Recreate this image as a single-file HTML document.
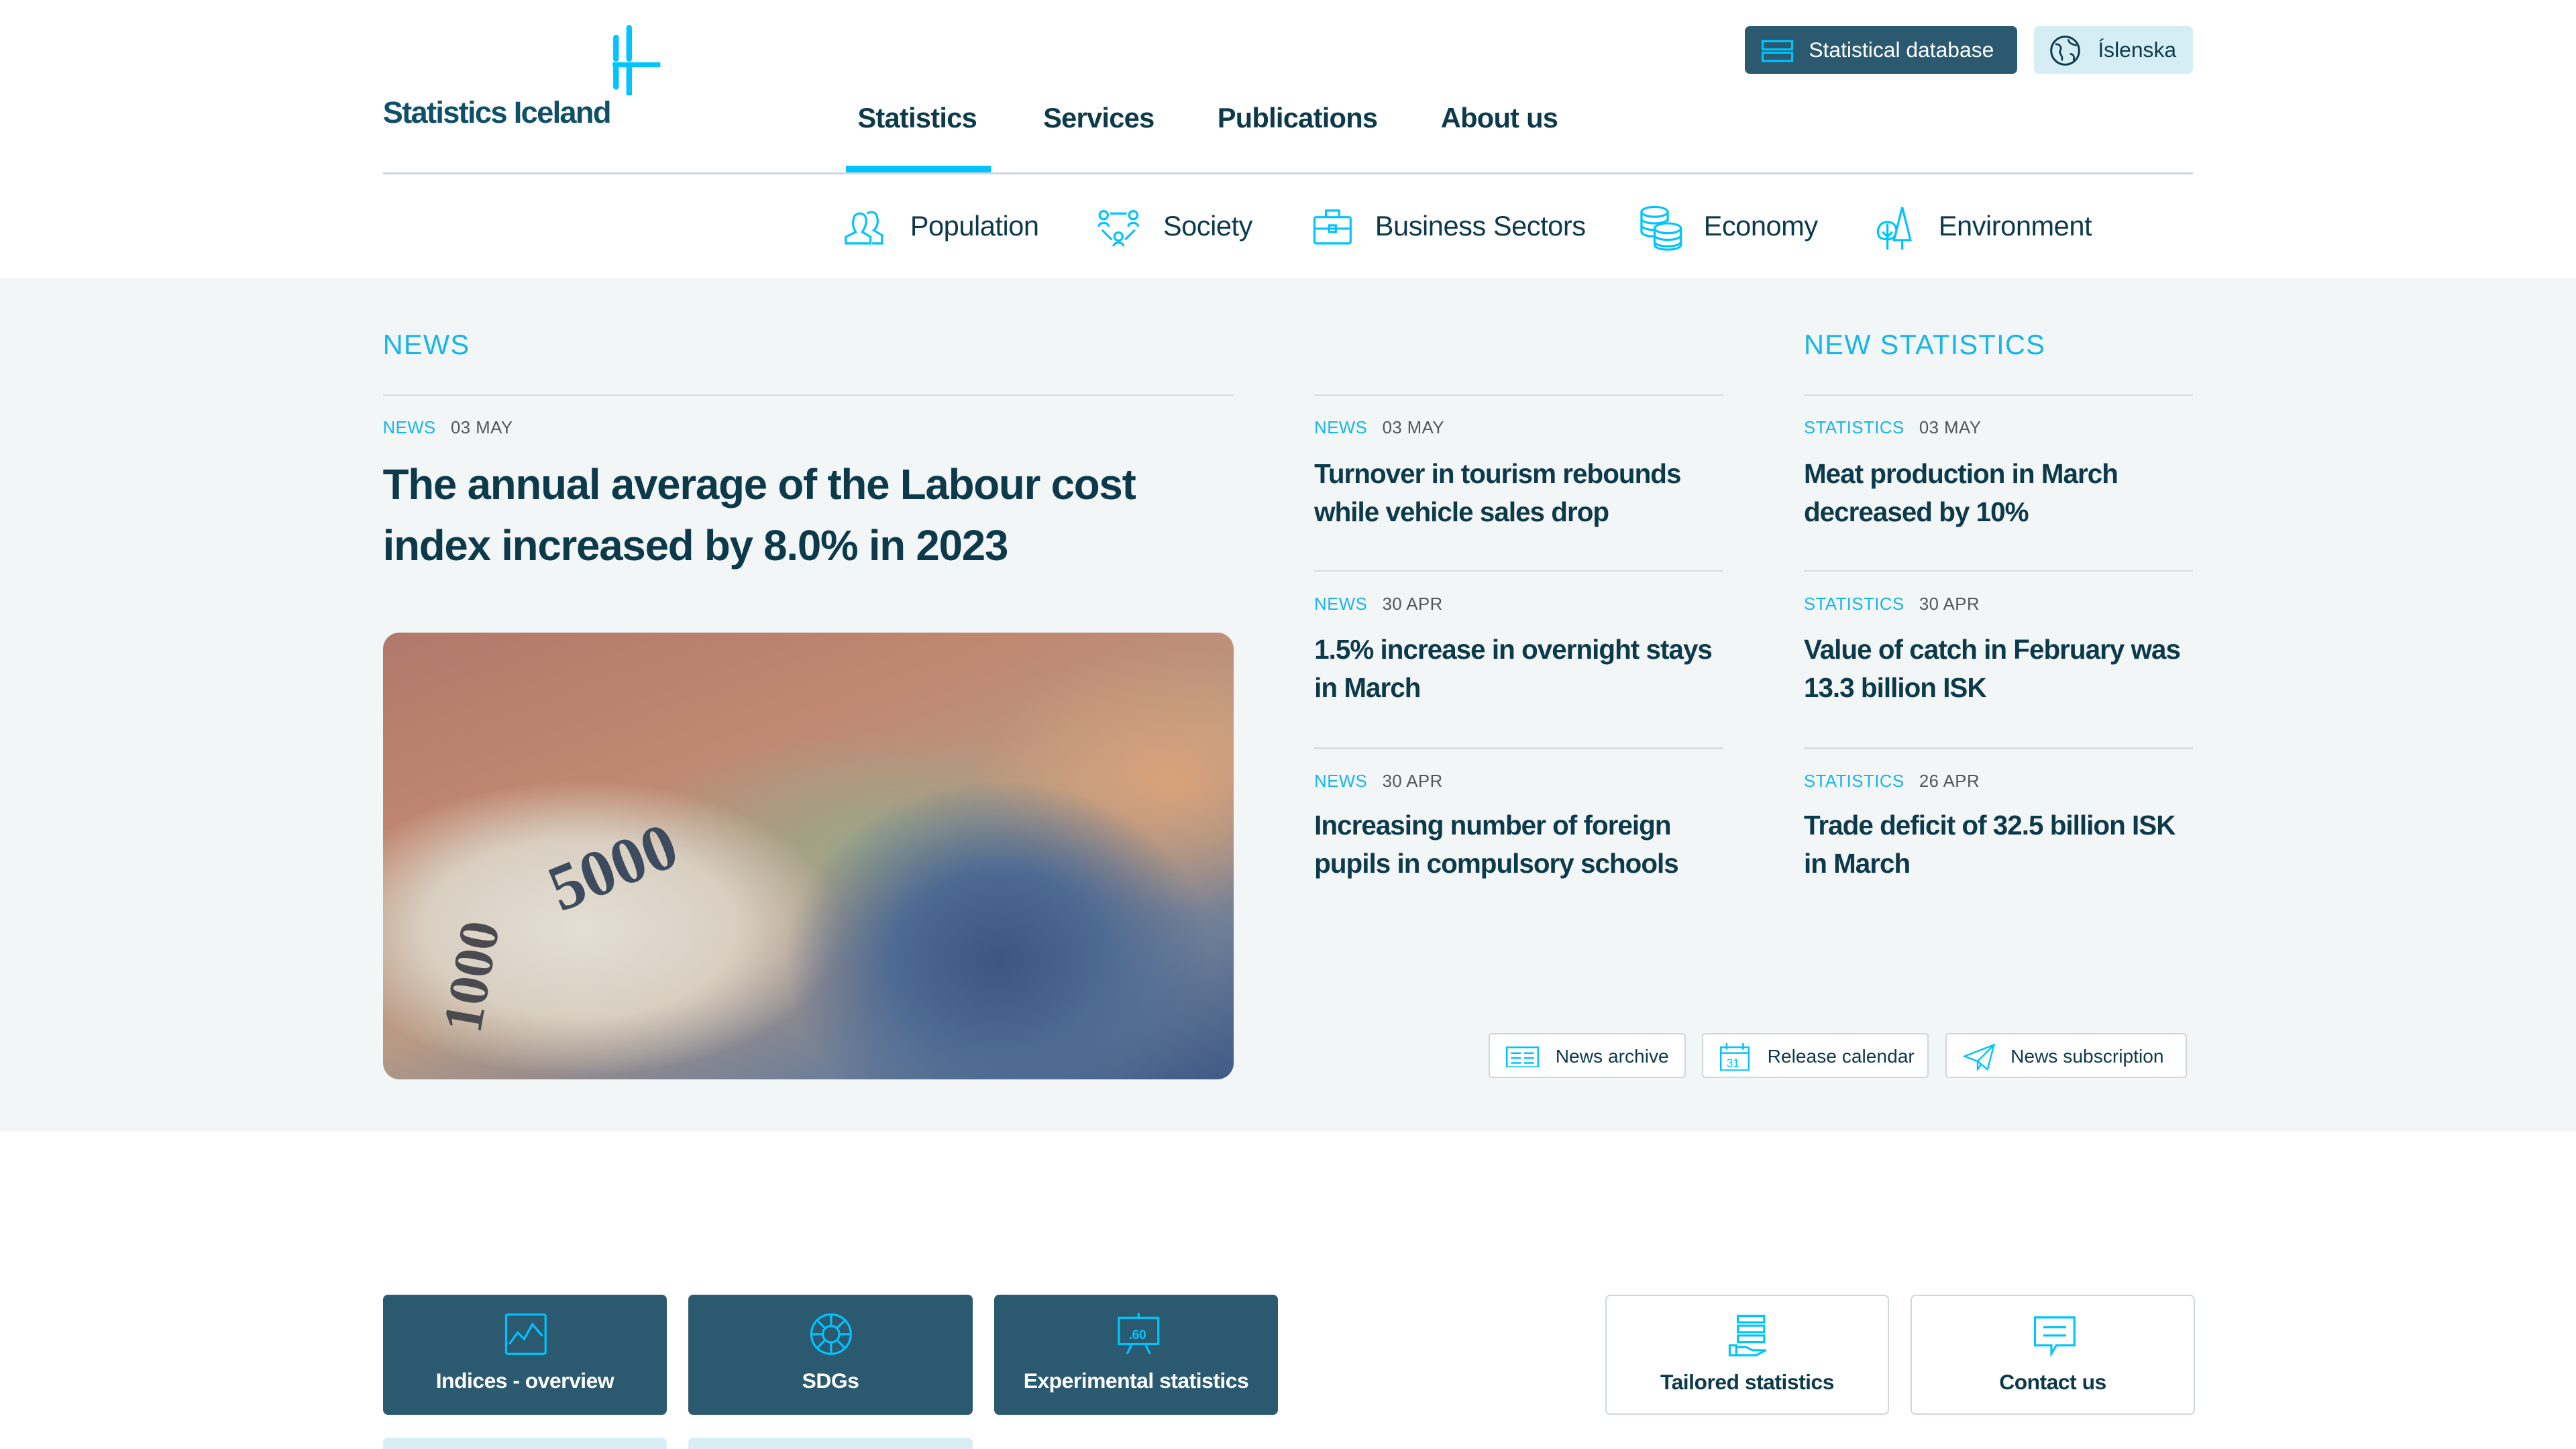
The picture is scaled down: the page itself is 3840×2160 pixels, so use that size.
<!DOCTYPE html>
<html><head><meta charset="utf-8"><style>
html,body{margin:0;padding:0;background:#fff;overflow:hidden}
body{width:1568px;height:882px;zoom:2.44898;font-family:"Liberation Sans",sans-serif;color:#0d3a4a;position:relative}
.a{position:absolute;white-space:nowrap}
.logo{left:233px;top:58px;font-size:18.5px;font-weight:bold;color:#0f5068;letter-spacing:-0.7px}
.btn1{left:1062px;top:16px;width:166px;height:29px;background:#2b5a70;border-radius:3px;color:#fff;font-size:13px;line-height:29px}
.btn2{left:1238px;top:16px;width:97px;height:29px;background:#d5edf4;border-radius:3px;color:#0d3a4a;font-size:13px;line-height:29px}
.nav{top:62px;font-size:17px;font-weight:bold;color:#0d3a4a;letter-spacing:-0.3px}
.cat{top:128px;font-size:17px;color:#0d3a4a;letter-spacing:-0.2px}
.gray{left:0;top:169px;width:1568px;height:520px;background:#f2f6f7}
.lbl{font-size:17px;color:#19b5e6;letter-spacing:0.5px;top:200px}
.line{height:1px;background:#d6dcdf}
.meta{font-size:10.5px;color:#555;letter-spacing:0.2px}
.meta b{color:#19b5e6;font-weight:normal;margin-right:6px}
.t{font-size:16.5px;line-height:23px;color:#0d3a4a;font-weight:bold;white-space:normal;letter-spacing:-0.4px}
.sb{top:629px;height:27px;background:#fff;border:1px solid #d0d6d9;border-radius:2px;font-size:11.5px;line-height:27px;color:#0d3a4a;box-sizing:border-box}
.tile{top:788px;width:173px;height:73px;border-radius:3px;background:#2b5a70;color:#fff;font-size:13px;font-weight:bold;text-align:center;letter-spacing:-0.2px}
.tile span{position:absolute;left:0;right:0;top:45px}
.tile svg{position:absolute;left:74px;top:11px}
.wt{background:#fff;border:1px solid #cfd7da;box-sizing:border-box;color:#0d3a4a}
</style></head><body>
<svg class="a" style="left:370px;top:14px" width="34" height="44"><g stroke="#00c4ff" stroke-width="3.4" stroke-linecap="round"><line x1="5" y1="9" x2="5" y2="22"/><line x1="5" y1="26" x2="5" y2="39"/><line x1="13" y1="3" x2="13" y2="22"/><line x1="13" y1="26" x2="13" y2="44"/></g><rect x="3" y="24" width="29" height="3" fill="#00c4ff"/></svg>
<div class="a logo">Statistics Iceland</div>
<div class="a btn1"><svg style="position:absolute;left:10px;top:8px" width="20" height="14"><g fill="none" stroke="#00c4ff" stroke-width="1.3"><rect x="1" y="1" width="18" height="5"/><rect x="1" y="8" width="18" height="5"/></g></svg><span style="position:absolute;left:39px">Statistical database</span></div>
<div class="a btn2"><svg style="position:absolute;left:9px;top:5px" width="20" height="20"><circle cx="10" cy="10" r="8.5" fill="none" stroke="#0d3a4a" stroke-width="1.2"/><path d="M4 6c3 0 4 2 3 4s2 3 1 6M12 3c0 3 3 3 5 4M13 12c2 0 3 2 2 4" fill="none" stroke="#0d3a4a" stroke-width="1.1"/></svg><span style="position:absolute;left:39px">Íslenska</span></div>
<div class="a nav" style="left:522px">Statistics</div>
<div class="a nav" style="left:635px">Services</div>
<div class="a nav" style="left:741px">Publications</div>
<div class="a nav" style="left:877px">About us</div>
<div class="a" style="left:515px;top:101px;width:88px;height:4px;background:#00c4ff"></div>
<div class="a line" style="left:233px;top:105px;width:1102px;background:#d0d5d8"></div>
<svg class="a" style="left:513px;top:126px" width="28" height="24" fill="none" stroke="#00c4ff" stroke-width="1.3"><path d="M2 22v-4l6-3c-2-3-2-6-1-9 1-3 6-3 7 0 1 3 0 6-2 9l5 3v4zM15 4c2-2 6-1 6 2 1 3 0 6-2 8l5 3v5h-6"/></svg>
<div class="a cat" style="left:554px">Population</div>
<svg class="a" style="left:667px;top:125px" width="28" height="26" fill="none" stroke="#00c4ff" stroke-width="1.3"><circle cx="5" cy="6" r="2.5"/><circle cx="23" cy="6" r="2.5"/><circle cx="14" cy="19" r="2.5"/><path d="M2 13c0-3 6-3 6 0M20 13c0-3 6-3 6 0M11 25c0-3 6-3 6 0M9 5h10M4 15l6 6M24 15l-6 6"/></svg>
<div class="a cat" style="left:708px">Society</div>
<svg class="a" style="left:799px;top:126px" width="24" height="24" fill="none" stroke="#00c4ff" stroke-width="1.3"><rect x="1" y="6" width="22" height="16" rx="1"/><path d="M8 6V2h8v4M1 13h22"/><rect x="10" y="11" width="4" height="4"/></svg>
<div class="a cat" style="left:837px">Business Sectors</div>
<svg class="a" style="left:997px;top:125px" width="28" height="28" fill="none" stroke="#00c4ff" stroke-width="1.3"><ellipse cx="10" cy="4" rx="8" ry="3"/><path d="M2 4v12c0 2 4 3 8 3M18 4v6M2 8c0 2 4 3 8 3s8-1 8-3M2 12c0 2 4 3 8 3"/><ellipse cx="18" cy="14" rx="8" ry="3"/><path d="M10 14v10c0 2 4 3 8 3s8-1 8-3V14M10 18c0 2 4 3 8 3s8-1 8-3M10 22c0 2 4 3 8 3s8-1 8-3"/></svg>
<div class="a cat" style="left:1037px">Economy</div>
<svg class="a" style="left:1141px;top:124px" width="26" height="28" fill="none" stroke="#00c4ff" stroke-width="1.3"><path d="M17 2l-5 20h10zM17 22v6M8 28V12M3 20c-2-4 0-9 5-9s7 5 4 9c-1 2-7 2-9 0zM5 17l3 3 3-3"/></svg>
<div class="a cat" style="left:1180px">Environment</div>

<div class="a gray"></div>
<div class="a lbl" style="left:233px">NEWS</div>
<div class="a lbl" style="left:1098px">NEW STATISTICS</div>
<div class="a line" style="left:233px;top:240px;width:518px"></div>
<div class="a meta" style="left:233px;top:255px"><b>NEWS</b> 03 MAY</div>
<div class="a" style="left:233px;top:277px;width:500px;font-size:26px;line-height:37px;font-weight:bold;color:#0d3a4a;white-space:normal;letter-spacing:-0.5px">The annual average of the Labour cost index increased by 8.0% in 2023</div>
<div class="a" style="left:233px;top:385px;width:518px;height:272px;border-radius:10px;overflow:hidden;background:
radial-gradient(ellipse 130px 110px at 375px 200px,#3c5680 0%,#4d6a93 50%,rgba(80,100,140,0) 100%),
radial-gradient(ellipse 160px 90px at 120px 180px,#e4ded3 0%,#d8cfc1 60%,rgba(210,200,185,0) 100%),
radial-gradient(ellipse 120px 80px at 480px 90px,#d8a27a 0%,rgba(200,140,100,0) 100%),
radial-gradient(ellipse 150px 70px at 300px 130px,#9aa588 0%,rgba(150,160,130,0) 100%),
linear-gradient(160deg,#b0796a 0%,#c08770 30%,#b99a84 55%,#6d7e98 80%,#3f5a86 100%)">
<div style="position:absolute;left:100px;top:120px;font:bold 40px 'Liberation Serif',serif;color:#3d4b5e;transform:rotate(-22deg)">5000</div>
<div style="position:absolute;left:20px;top:190px;font:bold 34px 'Liberation Serif',serif;color:#4a4a50;transform:rotate(-80deg)">1000</div>
</div>

<div class="a line" style="left:800px;top:240px;width:249px"></div>
<div class="a line" style="left:800px;top:347px;width:249px"></div>
<div class="a line" style="left:800px;top:455px;width:249px"></div>
<div class="a meta" style="left:800px;top:255px"><b>NEWS</b> 03 MAY</div>
<div class="a t" style="left:800px;top:277px;width:249px">Turnover in tourism rebounds while vehicle sales drop</div>
<div class="a meta" style="left:800px;top:362px"><b>NEWS</b> 30 APR</div>
<div class="a t" style="left:800px;top:384px;width:249px">1.5% increase in overnight stays in March</div>
<div class="a meta" style="left:800px;top:470px"><b>NEWS</b> 30 APR</div>
<div class="a t" style="left:800px;top:491px;width:249px">Increasing number of foreign pupils in compulsory schools</div>

<div class="a line" style="left:1098px;top:240px;width:237px"></div>
<div class="a line" style="left:1098px;top:347px;width:237px"></div>
<div class="a line" style="left:1098px;top:455px;width:237px"></div>
<div class="a meta" style="left:1098px;top:255px"><b>STATISTICS</b> 03 MAY</div>
<div class="a t" style="left:1098px;top:277px;width:237px">Meat production in March decreased by 10%</div>
<div class="a meta" style="left:1098px;top:362px"><b>STATISTICS</b> 30 APR</div>
<div class="a t" style="left:1098px;top:384px;width:240px">Value of catch in February was 13.3 billion ISK</div>
<div class="a meta" style="left:1098px;top:470px"><b>STATISTICS</b> 26 APR</div>
<div class="a t" style="left:1098px;top:491px;width:240px">Trade deficit of 32.5 billion ISK in March</div>

<div class="a sb" style="left:906px;width:120px"><svg style="position:absolute;left:10px;top:7px" width="20" height="13" fill="none" stroke="#00c4ff" stroke-width="1"><rect x="0.5" y="0.5" width="19" height="12"/><path d="M3 4h6M3 7h6M3 10h6M11 4h6M11 7h6M11 10h6"/></svg><span style="position:absolute;left:40px">News archive</span></div>
<div class="a sb" style="left:1036px;width:138px"><svg style="position:absolute;left:10px;top:5px" width="18" height="17" fill="none" stroke="#00c4ff" stroke-width="1"><rect x="0.5" y="2.5" width="17" height="14"/><path d="M0.5 6h17M4 0v4M14 0v4"/><text x="4" y="14.5" font-size="7" fill="#00c4ff" stroke="none" font-family="Liberation Sans">31</text></svg><span style="position:absolute;left:39px">Release calendar</span></div>
<div class="a sb" style="left:1184px;width:147px"><svg style="position:absolute;left:10px;top:5px" width="20" height="17" fill="none" stroke="#00c4ff" stroke-width="1"><path d="M1 8L19 1 15 16 9 11zM9 11v5l2-3M19 1L9 11"/></svg><span style="position:absolute;left:39px">News subscription</span></div>

<div class="a tile" style="left:233px"><svg width="26" height="26" fill="none" stroke="#00c4ff" stroke-width="1.3"><rect x="1" y="1" width="24" height="24" rx="1"/><path d="M3 19l5-7 4 4 5-9 6 7"/></svg><span>Indices - overview</span></div>
<div class="a tile" style="left:419px"><svg width="26" height="26" fill="none" stroke="#00c4ff" stroke-width="1.3"><circle cx="13" cy="13" r="12"/><circle cx="13" cy="13" r="5"/><path d="M13 1v7M13 18v7M1 13h7M18 13h7M5 5l4 4M17 17l4 4M21 5l-4 4M9 17l-4 4"/></svg><span>SDGs</span></div>
<div class="a tile" style="left:605px"><svg width="28" height="26" fill="none" stroke="#00c4ff" stroke-width="1.3"><rect x="2" y="3" width="24" height="16"/><path d="M14 0v3M10 19l-3 6M18 19l3 6"/><text x="8" y="16" font-size="8" fill="#00c4ff" stroke="none" font-family="Liberation Sans">.60</text></svg><span>Experimental statistics</span></div>
<div class="a tile wt" style="left:977px"><svg width="26" height="26" fill="none" stroke="#00c4ff" stroke-width="1.3"><rect x="6" y="1" width="16" height="4"/><rect x="6" y="7" width="16" height="4"/><rect x="6" y="13" width="16" height="4"/><path d="M1 19h4v6H1zM5 20h6l4 2h8l-6 3H5"/></svg><span>Tailored statistics</span></div>
<div class="a tile wt" style="left:1163px"><svg width="26" height="26" fill="none" stroke="#00c4ff" stroke-width="1.3"><path d="M1 2h24v17H14l-3 5v-5H1z"/><path d="M6 8h14M6 13h14"/></svg><span>Contact us</span></div>
<div class="a" style="left:233px;top:875px;width:173px;height:10px;background:#d9eef4;border-radius:3px"></div>
<div class="a" style="left:419px;top:875px;width:173px;height:10px;background:#d9eef4;border-radius:3px"></div>
</body></html>
